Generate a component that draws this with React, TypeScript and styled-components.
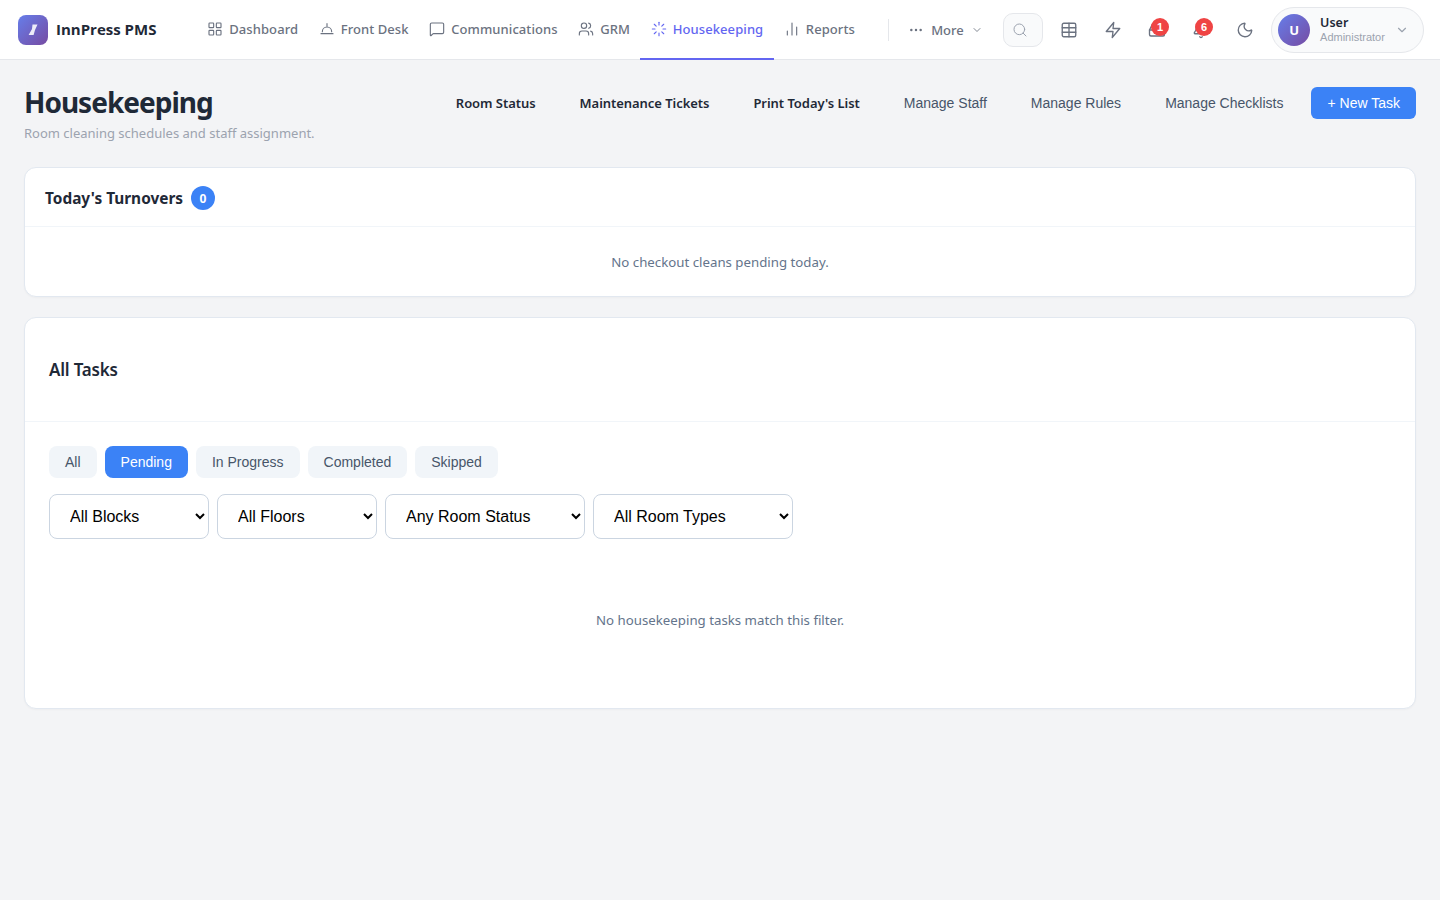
import React from "react";
import styled, { createGlobalStyle } from "styled-components";
import {
  Bell,
  ChartNoAxesColumn,
  ChevronDown,
  Ellipsis,
  Inbox,
  LayoutGrid,
  Loader,
  MessageSquare,
  Moon,
  Search,
  Table,
  Users,
} from "lucide-react";

const GlobalStyle = createGlobalStyle`
  html, body {
    margin: 0;
    background: #f3f4f6;
    font-family: "Noto Sans", "Liberation Sans", sans-serif;
  }
  * { box-sizing: border-box; }
`;

const FrontDeskIcon = ({ size = 16, strokeWidth = 1.7 }: { size?: number; strokeWidth?: number }) => (
  <svg width={size} height={size} viewBox="0 0 24 24" fill="none" stroke="currentColor" strokeWidth={strokeWidth} strokeLinecap="round">
    <path d="M12 4v4M3 19h18M5 16a7 7 0 0 1 14 0" />
  </svg>
);

const BoltIcon = ({ size = 18 }: { size?: number }) => (
  <svg width={size} height={size} viewBox="0 0 24 24" fill="none" stroke="currentColor" strokeWidth="1.8" strokeLinejoin="round">
    <path d="M13 2 3 14h9l-1 8 10-12h-9z" />
  </svg>
);

const NAV_ITEMS = [
  { label: "Dashboard", icon: LayoutGrid },
  { label: "Front Desk", icon: FrontDeskIcon },
  { label: "Communications", icon: MessageSquare },
  { label: "GRM", icon: Users },
  { label: "Housekeeping", icon: Loader, active: true },
  { label: "Reports", icon: ChartNoAxesColumn },
];

const PAGE_ACTIONS = [
  { label: "Room Status", strong: true },
  { label: "Maintenance Tickets", strong: true },
  { label: "Print Today's List", strong: true },
  { label: "Manage Staff" },
  { label: "Manage Rules" },
  { label: "Manage Checklists" },
];

const STATUS_FILTERS = ["All", "Pending", "In Progress", "Completed", "Skipped"];

const SELECTS = [
  { label: "All Blocks", width: 160 },
  { label: "All Floors", width: 160 },
  { label: "Any Room Status", width: 200 },
  { label: "All Room Types", width: 200 },
];

export default function App() {
  return (
    <>
      <GlobalStyle />
      <Header>
        <Brand>
          <LogoMark>
            <svg width="14" height="14" viewBox="0 0 14 14">
              <path d="M6.5 1.5h5L9 7l-1.4 5H2.6L6 6z" fill="#fff" fillOpacity="0.88" />
            </svg>
          </LogoMark>
          <BrandName>InnPress PMS</BrandName>
        </Brand>
        <Nav>
          {NAV_ITEMS.map(({ label, icon: Icon, active }) => (
            <NavItem key={label} $active={active}>
              <Icon size={16} strokeWidth={1.7} />
              {label}
            </NavItem>
          ))}
        </Nav>
        <NavDivider />
        <MoreItem>
          <Ellipsis size={16} strokeWidth={1.7} />
          More
          <ChevronDown size={12} strokeWidth={1.7} />
        </MoreItem>
        <SearchBox>
          <Search size={16} strokeWidth={1.5} />
        </SearchBox>
        <IconButton>
          <Table size={18} strokeWidth={1.8} />
        </IconButton>
        <IconButton>
          <BoltIcon />
        </IconButton>
        <IconButton>
          <Inbox size={18} strokeWidth={1.8} />
          <CountBadge>1</CountBadge>
        </IconButton>
        <IconButton>
          <Bell size={18} strokeWidth={1.8} />
          <CountBadge>6</CountBadge>
        </IconButton>
        <IconButton>
          <Moon size={18} strokeWidth={1.8} />
        </IconButton>
        <UserPill>
          <Avatar>U</Avatar>
          <UserText>
            <UserName>User</UserName>
            <UserRole>Administrator</UserRole>
          </UserText>
          <ChevronDown size={14} color="#9ca3af" />
        </UserPill>
      </Header>
      <Page>
        <TitleRow>
          <div>
            <Title>Housekeeping</Title>
            <Subtitle>Room cleaning schedules and staff assignment.</Subtitle>
          </div>
          <Actions>
            {PAGE_ACTIONS.map(({ label, strong }) => (
              <ActionButton key={label} $strong={strong}>
                {label}
              </ActionButton>
            ))}
            <PrimaryButton>+ New Task</PrimaryButton>
          </Actions>
        </TitleRow>
        <TurnoverCard>
          <TurnoverHeader>
            <TurnoverTitle>Today's Turnovers</TurnoverTitle>
            <RoundCount>0</RoundCount>
          </TurnoverHeader>
          <TurnoverEmpty>No checkout cleans pending today.</TurnoverEmpty>
        </TurnoverCard>
        <TasksCard>
          <TasksHeader>All Tasks</TasksHeader>
          <TasksBody>
            <Pills>
              {STATUS_FILTERS.map((label) => (
                <Pill key={label} $active={label === "Pending"}>
                  {label}
                </Pill>
              ))}
            </Pills>
            <Filters>
              {SELECTS.map(({ label, width }) => (
                <FilterSelect key={label} $width={width} defaultValue={label}>
                  <option>{label}</option>
                </FilterSelect>
              ))}
            </Filters>
            <TasksEmpty>No housekeeping tasks match this filter.</TasksEmpty>
          </TasksBody>
        </TasksCard>
      </Page>
    </>
  );
}

const Header = styled.header`
  display: flex;
  align-items: center;
  height: 60px;
  padding: 0 16px 0 18px;
  background: #fff;
  border-bottom: 1px solid #e5e7eb;
`;

const Brand = styled.div`
  display: flex;
  align-items: center;
  gap: 8px;
  width: 179px;
`;

const LogoMark = styled.div`
  display: flex;
  align-items: center;
  justify-content: center;
  width: 30px;
  height: 30px;
  border-radius: 8px;
  background: linear-gradient(135deg, #667eea, #764ba2);
`;

const BrandName = styled.span`
  margin-bottom: 2px;
  font-family: "Open Sans", sans-serif;
  font-size: 15px;
  font-weight: 700;
  color: #1f2937;
`;

const Nav = styled.nav`
  display: flex;
  align-self: stretch;
`;

const NavItem = styled.a<{ $active?: boolean }>`
  display: flex;
  align-items: center;
  gap: 6px;
  padding: 0 10.3px;
  margin-bottom: -1px;
  font-size: 13px;
  letter-spacing: 0.08px;
  font-weight: 500;
  white-space: nowrap;
  color: ${(p) => (p.$active ? "#6366f1" : "#6b7280")};
  border-bottom: 2px solid ${(p) => (p.$active ? "#6366f1" : "transparent")};
`;

const NavDivider = styled.div`
  width: 1px;
  height: 22px;
  margin: 0 12px 0 23px;
  background: #e5e7eb;
`;

const MoreItem = styled.div`
  display: flex;
  align-items: center;
  gap: 7px;
  width: 102px;
  padding: 0 7px;
  font-size: 13px;
  font-weight: 500;
  color: #6b7280;
`;

const SearchBox = styled.div`
  display: flex;
  align-items: center;
  justify-content: center;
  width: 40px;
  height: 34px;
  margin-right: 4px;
  padding-right: 6px;
  color: #9ca3af;
  background: #f9fafb;
  border: 1px solid #e5e7eb;
  border-radius: 10px;
`;

const IconButton = styled.div`
  position: relative;
  display: flex;
  align-items: center;
  justify-content: center;
  width: 44px;
  height: 36px;
  color: #6b7280;
`;

const CountBadge = styled.span`
  position: absolute;
  top: 6px;
  left: 16px;
  display: flex;
  align-items: center;
  justify-content: center;
  width: 18px;
  height: 18px;
  border-radius: 50%;
  font-family: "Liberation Sans", sans-serif;
  font-size: 11px;
  font-weight: 700;
  color: #fff;
  background: #ef4444;
`;

const UserPill = styled.div`
  display: flex;
  align-items: center;
  gap: 10px;
  width: 153px;
  height: 46px;
  margin-left: 4px;
  padding: 0 14px 0 6px;
  background: #f9fafb;
  border: 1px solid #e5e7eb;
  border-radius: 23px;
`;

const Avatar = styled.div`
  display: flex;
  align-items: center;
  justify-content: center;
  flex: none;
  width: 32px;
  height: 32px;
  border-radius: 50%;
  font-size: 13px;
  font-weight: 700;
  color: #fff;
  background: linear-gradient(135deg, #667eea, #764ba2);
`;

const UserText = styled.div`
  display: flex;
  flex: 1;
  flex-direction: column;
`;

const UserName = styled.span`
  font-size: 12.5px;
  line-height: 15px;
  font-weight: 600;
  color: #1f2937;
`;

const UserRole = styled.span`
  font-family: "Liberation Sans", sans-serif;
  font-size: 11px;
  line-height: 14px;
  color: #9ca3af;
`;

const Page = styled.main`
  padding: 24px;
`;

const TitleRow = styled.div`
  display: flex;
  align-items: flex-start;
  justify-content: space-between;
  margin-bottom: 24px;
`;

const Title = styled.h1`
  margin: 0;
  font-size: 28px;
  line-height: 37px;
  letter-spacing: -1px;
  font-weight: 700;
  color: #1f2937;
`;

const Subtitle = styled.p`
  margin: 2px 0 0;
  font-size: 13px;
  line-height: 20px;
  color: #9ca3af;
`;

const Actions = styled.div`
  display: flex;
  align-items: center;
  gap: 12px;
  padding-top: 3px;
`;

const ActionButton = styled.button<{ $strong?: boolean }>`
  height: 32px;
  padding: 0 16px;
  border: 0;
  background: transparent;
  font-family: ${(p) => (p.$strong ? '"Noto Sans"' : '"Liberation Sans"')}, sans-serif;
  font-size: ${(p) => (p.$strong ? "13px" : "14px")};
  letter-spacing: ${(p) => (p.$strong ? "-0.05px" : "normal")};
  font-weight: ${(p) => (p.$strong ? 600 : 400)};
  color: ${(p) => (p.$strong ? "#1f2937" : "#475569")};
`;

const PrimaryButton = styled.button`
  width: 104.6px;
  height: 32px;
  padding: 0;
  border: 0;
  border-radius: 6px;
  background: #3b82f6;
  font-family: "Liberation Sans", sans-serif;
  font-size: 14px;
  color: #fff;
`;

const Card = styled.section`
  background: #fff;
  border: 1px solid #e2e8f0;
  border-radius: 12px;
  box-shadow: 0 1px 2px rgba(0, 0, 0, 0.03);
`;

const TurnoverCard = styled(Card)`
  margin-bottom: 20px;
`;

const TurnoverHeader = styled.div`
  display: flex;
  align-items: center;
  gap: 8px;
  height: 59px;
  padding: 2px 20px 0;
  border-bottom: 1px solid #f1f5f9;
`;

const TurnoverTitle = styled.h3`
  margin: 0;
  font-size: 15.4px;
  font-weight: 700;
  color: #1f2937;
`;

const RoundCount = styled.span`
  display: flex;
  align-items: center;
  justify-content: center;
  width: 24px;
  height: 24px;
  border-radius: 50%;
  font-size: 12px;
  font-weight: 700;
  color: #fff;
  background: #3b82f6;
`;

const TurnoverEmpty = styled.p`
  margin: 0;
  padding: 25px 20px 24px;
  text-align: center;
  font-size: 13.25px;
  line-height: 20px;
  color: #64748b;
`;

const TasksCard = styled(Card)``;

const TasksHeader = styled.h2`
  margin: 0;
  height: 104px;
  padding: 0 24px;
  line-height: 104px;
  font-size: 17px;
  letter-spacing: -0.2px;
  font-weight: 600;
  color: #1f2937;
  border-bottom: 1px solid #f1f5f9;
`;

const TasksBody = styled.div`
  padding: 24px;
`;

const Pills = styled.div`
  display: flex;
  gap: 8px;
  margin-bottom: 16px;
`;

const Pill = styled.button<{ $active?: boolean }>`
  height: 32px;
  padding: 0 16px;
  border: 0;
  border-radius: 8px;
  font-family: "Liberation Sans", sans-serif;
  font-size: 14px;
  color: ${(p) => (p.$active ? "#fff" : "#475569")};
  background: ${(p) => (p.$active ? "#3b82f6" : "#f1f5f9")};
`;

const Filters = styled.div`
  display: flex;
  gap: 8px;
`;

const FilterSelect = styled.select<{ $width: number }>`
  width: ${(p) => p.$width}px;
  height: 45px;
  padding: 0 16px;
  font-family: "Liberation Sans", sans-serif;
  font-size: 16px;
  color: #000;
  background: #fff;
  border: 1px solid #cbd5e1;
  border-radius: 8px;
`;

const TasksEmpty = styled.p`
  margin: 0;
  padding: 71px 0 54px;
  text-align: center;
  font-size: 13.25px;
  line-height: 20px;
  color: #64748b;
`;
